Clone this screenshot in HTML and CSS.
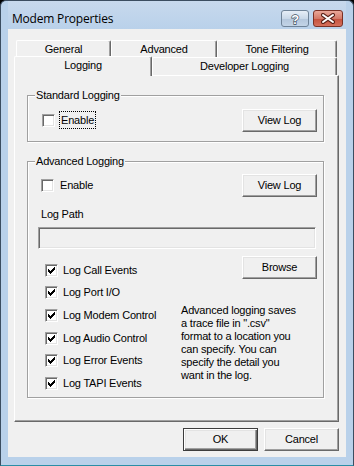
FILE: index.html
```html
<!DOCTYPE html>
<html>
<head>
	<title>Modem Properties</title>
	<meta http-equiv="content-type" content="text/html;charset=utf-8" />
	<link rel="stylesheet" href="styles.css">
</head>
<body>
<div class="window">
	<div class="titlebar">
		<span class="title">Modem Properties</span>
		<span class="cap help">
			<svg width="12" height="14" viewBox="0 0 12 14"><text x="6" y="11.5" text-anchor="middle" class="qmark">?</text></svg>
		</span>
		<span class="cap close">
			<svg width="14" height="11" viewBox="0 0 14 11">
				<path d="M2 2 L12 9 M12 2 L2 9" stroke="#5b2219" stroke-width="4" stroke-linecap="round"/>
				<path d="M2 2 L12 9 M12 2 L2 9" stroke="#fff" stroke-width="2" stroke-linecap="round"/>
			</svg>
		</span>
	</div>
	<div class="client">
		<div class="tabctl">
			<div class="tabrow back">
				<div class="tab t-general">General</div>
				<div class="tab t-advanced">Advanced</div>
				<div class="tab t-tone">Tone Filtering</div>
			</div>
			<div class="tabrow front">
				<div class="tab sel t-logging">Logging</div>
				<div class="tab t-dev">Developer Logging</div>
			</div>
			<div class="panel">
				<div class="group std">
					<span class="group-title">Standard Logging</span>
					<label class="chk std-chk"><span class="box"></span><span class="focus">Enable</span></label>
					<button class="btn push-right">View Log</button>
				</div>
				<div class="group adv">
					<span class="group-title">Advanced Logging</span>
					<div class="adv-top">
						<label class="chk"><span class="box"></span><span class="lbl">Enable</span></label>
						<button class="btn push-right">View Log</button>
					</div>
					<div class="path-label">Log Path</div>
					<div class="edit"></div>
					<div class="lower">
						<div class="checks">
							<label class="chk row"><span class="box"><svg class="tick" width="7" height="7" viewBox="0 0 7 7"><path d="M0 2H1V3H2V4H3V3H4V2H5V1H6V0H7V3H6V4H5V5H4V6H3V7H2V6H1V5H0Z"/></svg></span><span class="lbl">Log Call Events</span></label>
							<label class="chk row"><span class="box"><svg class="tick" width="7" height="7" viewBox="0 0 7 7"><path d="M0 2H1V3H2V4H3V3H4V2H5V1H6V0H7V3H6V4H5V5H4V6H3V7H2V6H1V5H0Z"/></svg></span><span class="lbl">Log Port I/O</span></label>
							<label class="chk row"><span class="box"><svg class="tick" width="7" height="7" viewBox="0 0 7 7"><path d="M0 2H1V3H2V4H3V3H4V2H5V1H6V0H7V3H6V4H5V5H4V6H3V7H2V6H1V5H0Z"/></svg></span><span class="lbl">Log Modem Control</span></label>
							<label class="chk row"><span class="box"><svg class="tick" width="7" height="7" viewBox="0 0 7 7"><path d="M0 2H1V3H2V4H3V3H4V2H5V1H6V0H7V3H6V4H5V5H4V6H3V7H2V6H1V5H0Z"/></svg></span><span class="lbl">Log Audio Control</span></label>
							<label class="chk row"><span class="box"><svg class="tick" width="7" height="7" viewBox="0 0 7 7"><path d="M0 2H1V3H2V4H3V3H4V2H5V1H6V0H7V3H6V4H5V5H4V6H3V7H2V6H1V5H0Z"/></svg></span><span class="lbl">Log Error Events</span></label>
							<label class="chk row"><span class="box"><svg class="tick" width="7" height="7" viewBox="0 0 7 7"><path d="M0 2H1V3H2V4H3V3H4V2H5V1H6V0H7V3H6V4H5V5H4V6H3V7H2V6H1V5H0Z"/></svg></span><span class="lbl">Log TAPI Events</span></label>
						</div>
						<div class="side">
							<button class="btn">Browse</button>
							<p class="note">Advanced logging saves<br>a trace file in ".csv"<br>format to a location you<br>can specify. You can<br>specify the detail you<br>want in the log.</p>
						</div>
					</div>
				</div>
			</div>
		</div>
		<div class="buttons">
			<button class="btn default">OK</button>
			<button class="btn">Cancel</button>
		</div>
	</div>
</div>
</body>
</html>
```

FILE: styles.css
```css
*{margin:0;padding:0;box-sizing:border-box;}
body{background:#000;font:11px/13px "Liberation Sans", Arial, sans-serif;letter-spacing:-0.2px;color:#000;}

/* window frame */
.window{width:354px;height:466px;border:1px solid #3b4d60;border-bottom-color:#2a8ea6;border-radius:6px 6px 0 0;background:#b9d1ea;padding:0 7px 8px 7px;display:flex;flex-direction:column;}
.titlebar{height:28px;display:flex;align-items:flex-start;padding:0 3px 0 4px;background:linear-gradient(#c7d9ed, #b9d1ea);}
.title{margin-top:10px;font:12px/16px "Open Sans", "Noto Sans", sans-serif;letter-spacing:-0.2px;color:#000;}
.cap{height:17px;margin-top:9px;border-radius:3px;display:flex;align-items:center;justify-content:center;}
.help{width:28px;margin-left:auto;border:1px solid #6f8398;background:linear-gradient(#e6eef7, #c9d8e8 50%, #b3c6dc 51%, #c3d4e7);}
.close{width:30px;margin-left:4px;border:1px solid #7a3125;background:linear-gradient(#eaa899, #d47a68 50%, #c4503c 51%, #d5705c);}
.qmark{font:bold 13px "Liberation Sans", Arial, sans-serif;fill:#fff;stroke:#3c4c5e;stroke-width:1.3px;paint-order:stroke;}

.client{height:428px;background:#f0f0f0;padding:11px 7px 0 6px;display:flex;flex-direction:column;}

/* tabs */
.tabctl{width:325px;}
.tabrow{display:flex;padding:0 2px;}
.tabrow.back{height:17px;}
.tabrow.front{height:18px;align-items:flex-end;}
.tab{background:#f0f0f0;border-top:1px solid #fff;border-left:1px solid #fff;border-right:1px solid #696969;box-shadow:inset -1px 0 #a0a0a0;border-radius:2px 2px 0 0;text-align:center;white-space:nowrap;}
.back .tab{height:17px;line-height:16px;}
.t-general{width:95px;}
.t-advanced{width:106px;}
.t-tone{flex:1;}
.t-dev{flex:1;height:18px;line-height:17px;}
.tab.sel{position:relative;z-index:1;width:138px;height:20px;margin:0 0 -1px -2px;line-height:17px;padding-bottom:2px;}

.panel{height:347px;border:1px solid #fff;border-right-color:#696969;border-bottom-color:#696969;box-shadow:inset -1px -1px #a0a0a0;padding-top:19px;}

/* group boxes */
.group{position:relative;margin:0 14px 0 12px;border:1px solid #a0a0a0;box-shadow:inset 1px 1px #fff, 1px 1px #fff;}
.group-title{position:absolute;top:-7px;left:7px;padding:0 1px;background:#f0f0f0;line-height:13px;}
.std{height:47px;display:flex;align-items:flex-start;padding:13px 6px 0 14px;}
.adv{height:237px;margin-top:19px;padding:12px 6px 0 0;}

/* controls */
.chk{display:flex;align-items:center;}
.box{width:13px;height:13px;flex:none;background:#fff;border:1px solid;border-color:#a0a0a0 #fff #fff #a0a0a0;box-shadow:inset 1px 1px #696969, inset -1px -1px #e3e3e3;position:relative;}
.tick{position:absolute;left:2px;top:2px;fill:#000;shape-rendering:crispEdges;}
.std-chk{margin-top:2px;}
.focus{margin-left:4px;border:1px dotted #000;padding:1px 1px 1px 1px;line-height:14px;}
.lbl{margin-left:6px;white-space:nowrap;}
.push-right{margin-left:auto;}

.btn{width:75px;height:23px;flex:none;font:11px/13px "Liberation Sans", Arial, sans-serif;letter-spacing:-0.2px;color:#000;background:#f0f0f0;border:1px solid;border-color:#fff #696969 #696969 #fff;box-shadow:inset -1px -1px #a0a0a0, inset 1px 1px #e3e3e3;text-align:center;}
.btn.default{border-color:#3c3c3c;box-shadow:inset 1px 1px #fff, inset -1px -1px #696969, inset -2px -2px #a0a0a0, inset 2px 2px #e3e3e3;}

.adv-top{display:flex;align-items:center;height:23px;padding-left:13px;}
.path-label{margin:11px 0 0 13px;}
.edit{width:278px;height:22px;margin:6px 0 0 10px;background:#f0f0f0;border:1px solid;border-color:#a0a0a0 #fff #fff #a0a0a0;box-shadow:inset 1px 1px #696969, inset -1px -1px #e3e3e3;}
.lower{display:flex;margin-top:7px;}
.checks{padding:3px 0 0 17px;}
.chk.row{height:22.6px;}
.chk.row .lbl{margin-left:5px;}
.side{margin-left:auto;width:136px;display:flex;flex-direction:column;align-items:flex-end;}
.note{align-self:stretch;margin-top:25px;white-space:nowrap;line-height:13px;}

.buttons{display:flex;justify-content:flex-end;gap:6px;margin-top:6px;width:325px;}
```
